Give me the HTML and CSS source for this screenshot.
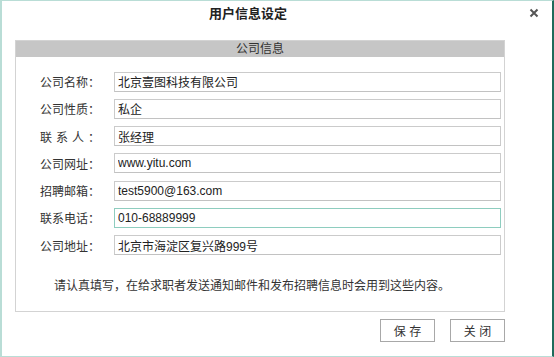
FILE: index.html
```html
<!DOCTYPE html>
<html lang="zh-CN">
<head>
  <meta charset="UTF-8" />
  <title>用户信息设定</title>
  <link rel="stylesheet" href="styles.css">
</head>
<body>
  <div class="dialog">
    <div class="titlebar">
      <span class="title">用户信息设定</span>
      <a class="close" href="#" aria-label="关闭">
        <svg width="10" height="10" viewBox="0 0 10 10"><path d="M1.5 1.5 L8.5 8.5 M8.5 1.5 L1.5 8.5" stroke="#555" stroke-width="2"/></svg>
      </a>
    </div>

    <div class="panel">
      <div class="panel-head">公司信息</div>
      <form class="form">
        <div class="row"><label>公司名称：</label><input type="text" value="北京壹图科技有限公司"></div>
        <div class="row"><label>公司性质：</label><input type="text" value="私企"></div>
        <div class="row"><label>联系人：</label><input type="text" value="张经理"></div>
        <div class="row"><label>公司网址：</label><input type="text" value="www.yitu.com"></div>
        <div class="row"><label>招聘邮箱：</label><input type="text" value="test5900@163.com"></div>
        <div class="row"><label>联系电话：</label><input type="text" class="focused" value="010-68889999"></div>
        <div class="row"><label>公司地址：</label><input type="text" value="北京市海淀区复兴路999号"></div>
      </form>
      <p class="note">请认真填写，在给求职者发送通知邮件和发布招聘信息时会用到这些内容。</p>
    </div>

    <div class="buttons">
      <button type="button">保 存</button>
      <button type="button">关 闭</button>
    </div>
  </div>
</body>
</html>
```

FILE: styles.css
```css
/* Reset */
* { margin: 0; padding: 0; box-sizing: border-box; }
body {
  font-family: "Liberation Sans", "Noto Sans CJK SC", sans-serif;
  font-size: 12px;
  color: #333;
  background: #fff;
}

/* Dialog window */
.dialog {
  width: 554px;
  height: 357px;
  border: 1px solid #b9ddd6;
  border-left-width: 2px;
  border-right: 2px solid #1f6b5b;
  background: #fff;
}

.titlebar {
  height: 39px;
  display: flex;
  align-items: flex-start;
  padding-top: 4px;
}
.titlebar .title {
  margin-left: 207px;
  font-size: 13px;
  font-weight: bold;
  line-height: 18px;
  color: #222;
}
.titlebar .close {
  margin-left: auto;
  margin-right: 13px;
  margin-top: 3px;
  display: flex;
}

/* Panel */
.panel {
  margin-left: 13px;
  width: 490px;
  border: 1px solid #d3d3d3;
}
.panel-head {
  height: 16px;
  line-height: 16px;
  background: #c6c6c6;
  text-align: center;
  color: #333;
}

.form {
  display: flex;
  flex-direction: column;
  gap: 7.3px;
  padding: 14.5px 0 0 24px;
}
.row {
  display: flex;
  align-items: center;
  height: 20px;
}
.row label {
  width: 60px;
  margin-right: 14px;
  text-align: justify;
  text-align-last: justify;
  color: #333;
}
.row input {
  width: 387px;
  height: 20px;
  padding: 0 3px;
  border: 1px solid #cbcbcb;
  border-bottom-color: #c2c2c2;
  font: inherit;
  color: #222;
  outline: none;
}
.row input.focused { border-color: #8ecdbf; }

.note {
  padding: 23px 0 17px 38px;
  line-height: 16px;
  color: #333;
}

/* Buttons */
.buttons {
  display: flex;
  gap: 15px;
  width: 503px;
  justify-content: flex-end;
  margin-top: 7px;
}
.buttons button {
  width: 55px;
  height: 23px;
  border: 1px solid #a8a8a8;
  background: #fff;
  font: inherit;
  font-size: 12px;
  color: #333;
  cursor: pointer;
}
```
